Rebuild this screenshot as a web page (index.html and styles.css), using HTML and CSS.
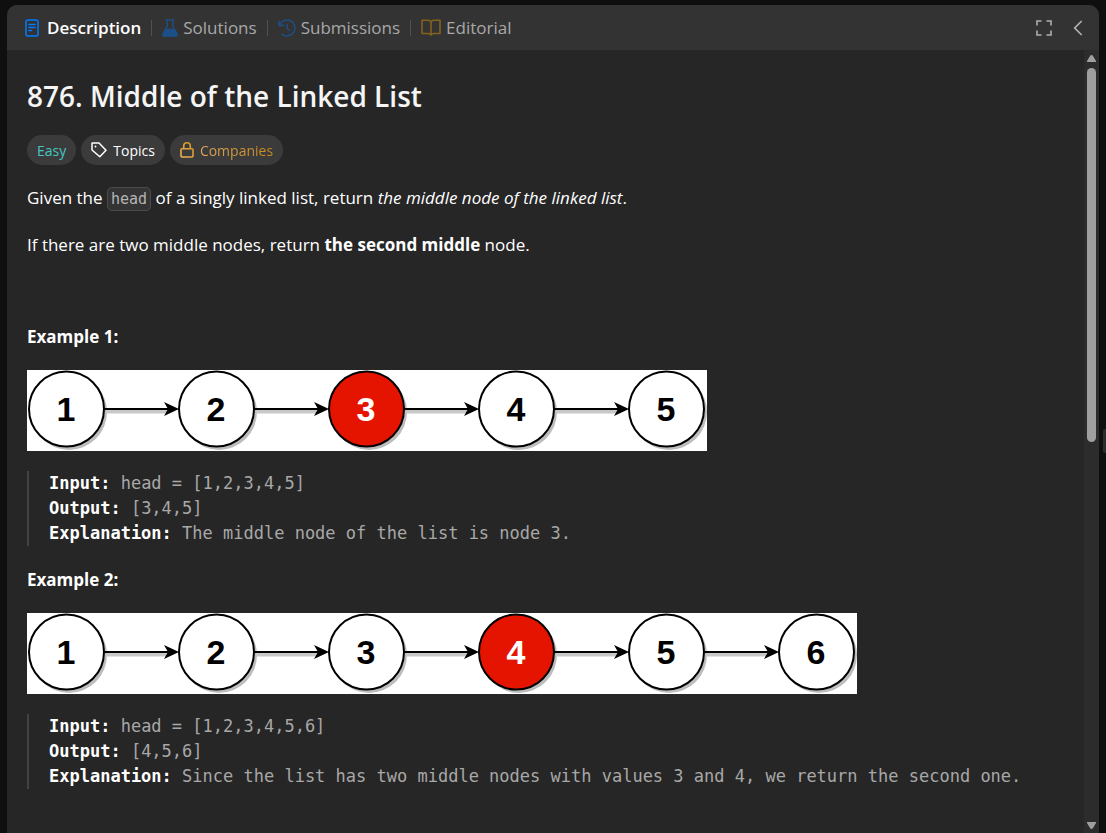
FILE: index.html
```html
<!DOCTYPE html>
<html lang="en">
<head>
<meta charset="utf-8">
<meta name="viewport" content="width=device-width, initial-scale=1">
<title>876. Middle of the Linked List</title>
<link rel="stylesheet" href="styles.css">
</head>
<body>
<main class="panel">
  <header class="panel-header">
    <nav class="tabs" aria-label="Problem sections">
      <button class="tab tab-active" type="button">
        <svg class="icon-doc" width="14" height="18" viewBox="0 0 14 18" fill="none" stroke="#007bff" stroke-width="1.5" stroke-linecap="round"><rect x="1" y="1" width="12" height="16" rx="2"/><path d="M4 5.5h6M4 8.5h6M4 11.5h2.5"/></svg>
        Description
      </button>
      <span class="divider"></span>
      <button class="tab" type="button">
        <svg width="16" height="18" viewBox="0 0 16 18" fill="none" stroke="#1d4f87" stroke-width="1.4" stroke-linecap="round" stroke-linejoin="round"><path d="M4 1h8M5.3 1v6L1 14.5Q.3 17 2.6 17h10.8q2.3 0 1.6-2.5L10.7 7V1"/><path d="M4 10.5h8l3 4.5q.2 2-1.600 2H2.600Q.8 17 1 15z" fill="#1d4f87"/></svg>
        Solutions
      </button>
      <span class="divider"></span>
      <button class="tab" type="button">
        <svg width="18" height="18" viewBox="0 0 18 18" fill="none" stroke="#1d4f87" stroke-width="1.5" stroke-linecap="round" stroke-linejoin="round"><path d="M1 2v4.500h4.500M1.500 6A8 8 0 1 1 4 15.200M9.200 5.500v4l2.300 2"/></svg>
        Submissions
      </button>
      <span class="divider"></span>
      <button class="tab" type="button">
        <svg width="20" height="17" viewBox="0 0 20 17" fill="none" stroke="#84621c" stroke-width="1.6" stroke-linejoin="round"><path d="M10 3Q9 1.200 7 1.200H1v13.300h6q2 0 3 1.500 1-1.500 3-1.500h6V1.200h-6q-2 0-3 1.800zV16"/></svg>
        Editorial
      </button>
    </nav>
    <div class="actions">
      <button class="action" type="button" aria-label="Full screen">
        <svg width="16" height="16" viewBox="0 0 16 16" fill="none" stroke="#b0b0b0" stroke-width="1.6"><path d="M1 5.500V1h4.500M10.500 1H15v4.500M15 10.500V15h-4.500M5.500 15H1v-4.500"/></svg>
      </button>
      <button class="action" type="button" aria-label="Collapse panel">
        <svg width="10" height="16" viewBox="0 0 10 16" fill="none" stroke="#b0b0b0" stroke-width="1.7"><path d="M8.700 1L1.700 8l7 7"/></svg>
      </button>
    </div>
  </header>
  <div class="panel-body">
    <article class="content">
      <h1 class="title">876. Middle of the Linked List</h1>
      <div class="pills">
        <span class="pill pill-easy">Easy</span>
        <button class="pill" type="button">
          <svg width="16" height="16" viewBox="0 0 16 16" fill="none" stroke="#fff" stroke-width="1.5" stroke-linejoin="round"><path d="M1 1.500Q1 1 1.500 1H8l7 7.200-6.200 6.600L1 8z"/><circle cx="4.500" cy="4.500" r=".9" fill="#fff" stroke="none"/></svg>
          Topics
        </button>
        <button class="pill" type="button">
          <svg width="14" height="16" viewBox="0 0 14 16" fill="none" stroke="url(#gold)" stroke-width="1.6"><defs><linearGradient id="gold" gradientUnits="userSpaceOnUse" x1="0" y1="16" x2="14" y2="0"><stop stop-color="#f0b65a"/><stop offset="1" stop-color="#d08c1c"/></linearGradient></defs><rect x="1" y="6.800" width="12" height="8.200" rx="1"/><path d="M3.700 6.500V4a3.300 3.200 0 0 1 6.600 0v2.500"/></svg>
          <span class="gold-text">Companies</span>
        </button>
      </div>
      <p class="text">Given the <code class="code">head</code> of a singly linked list, return <em>the middle node of the linked list</em>.</p>
      <p class="text">If there are two middle nodes, return <strong>the second middle</strong> node.</p>
      <p class="text">&nbsp;</p>
      <p class="text"><strong>Example 1:</strong></p>
      <svg class="diagram" width="680" height="81" viewBox="0 0 680 81" role="img" aria-label="Linked list of five nodes, node 3 highlighted">
        <defs>
          <g id="node"><circle cx="42" cy="42" r="38" fill="#bdbdbd"/><circle cx="39.500" cy="39" r="37.500" stroke="#000" stroke-width="2"/></g>
          <g id="arrow"><path d="M79 41.500h61" stroke="#c8c8c8" stroke-width="4"/><path d="M77 39h65" stroke="#000" stroke-width="2"/><path d="M152 39l-15-7 4 7-4 7z"/></g>
        </defs>
        <g fill="#fff"><use href="#node"/><use href="#node" x="150"/><use href="#node" x="300" fill="#e51400"/><use href="#node" x="450"/><use href="#node" x="600"/></g>
        <g fill="#000"><use href="#arrow"/><use href="#arrow" x="150"/><use href="#arrow" x="300"/><use href="#arrow" x="450"/></g>
        <g class="digits"><text x="39" y="51">1</text><text x="189" y="51">2</text><text x="339" y="51" fill="#fff">3</text><text x="489" y="51">4</text><text x="639" y="51">5</text></g>
      </svg>
      <pre class="sample"><strong>Input:</strong> head = [1,2,3,4,5]
<strong>Output:</strong> [3,4,5]
<strong>Explanation:</strong> The middle node of the list is node 3.</pre>
      <p class="text"><strong>Example 2:</strong></p>
      <svg class="diagram" width="830" height="81" viewBox="0 0 830 81" role="img" aria-label="Linked list of six nodes, node 4 highlighted">
        <g fill="#fff"><use href="#node"/><use href="#node" x="150"/><use href="#node" x="300"/><use href="#node" x="450" fill="#e51400"/><use href="#node" x="600"/><use href="#node" x="750"/></g>
        <g fill="#000"><use href="#arrow"/><use href="#arrow" x="150"/><use href="#arrow" x="300"/><use href="#arrow" x="450"/><use href="#arrow" x="600"/></g>
        <g class="digits"><text x="39" y="51">1</text><text x="189" y="51">2</text><text x="339" y="51">3</text><text x="489" y="51" fill="#fff">4</text><text x="639" y="51">5</text><text x="789" y="51">6</text></g>
      </svg>
      <pre class="sample"><strong>Input:</strong> head = [1,2,3,4,5,6]
<strong>Output:</strong> [4,5,6]
<strong>Explanation:</strong> Since the list has two middle nodes with values 3 and 4, we return the second one.</pre>
    </article>
    <div class="scrollbar" aria-hidden="true">
      <svg width="9" height="7" viewBox="0 0 9 7" fill="#9f9f9f"><path d="M4.500 0Q5.500 0 6 1l3 5v1H0V6l3-5q.5-1 1.500-1z"/></svg>
      <div class="track"><div class="thumb"></div></div>
      <svg width="9" height="7" viewBox="0 0 9 7" fill="#9f9f9f"><path d="M4.500 7Q5.500 7 6 6l3-5V0H0v1l3 5q.5 1 1.500 1z"/></svg>
    </div>
  </div>
</main>
<div class="splitter"></div>
</body>
</html>
```
FILE: styles.css
```css
* { box-sizing: border-box; }

body {
  margin: 0;
  height: 100vh;
  display: flex;
  background: #0f0f0f;
  color: #fff;
  font-family: "Open Sans", "Noto Sans", sans-serif;
  font-size: 17px;
  overflow: hidden;
}

button {
  font: inherit;
  color: inherit;
  background: none;
  border: 0;
  padding: 0;
  cursor: pointer;
}

svg { display: block; flex: none; }

.panel {
  flex: 1;
  min-width: 0;
  display: flex;
  flex-direction: column;
  margin: 5px 0 0 7px;
  border-radius: 10px 10px 0 0;
  background: #262626;
  overflow: hidden;
}

.panel-header {
  display: flex;
  justify-content: space-between;
  align-items: center;
  height: 45px;
  padding: 0 16px 0 18px;
  background: #333;
}

.tabs { display: flex; align-items: center; gap: 10px; }

.tab {
  display: flex;
  align-items: center;
  gap: 5px;
  line-height: 24px;
  color: #a8a8a8;
}

.tab-active { color: #fff; font-weight: 600; }
.icon-doc { margin-right: 3px; }
.divider { width: 1px; height: 16px; background: #515151; }
.actions { display: flex; align-items: center; gap: 21px; }

.panel-body { flex: 1; min-height: 0; display: flex; }
.content { flex: 1; min-width: 0; padding: 26px 20px 0; overflow: hidden; }

.title {
  margin: 0 0 19px;
  font-size: 28px;
  font-weight: 600;
  line-height: 40px;
  color: #f5f5f5;
}

.pills { display: flex; gap: 5px; margin-bottom: 20px; }

.pill {
  display: flex;
  align-items: center;
  gap: 6px;
  height: 30px;
  padding: 0 10px;
  border-radius: 15px;
  background: #3b3b3b;
  font-size: 14px;
}

.pill-easy { color: #46c6c2; }

.gold-text {
  background: linear-gradient(90deg, #dfa758, #c98a1e);
  background-clip: text;
  color: transparent;
}

.text { margin: 0 0 20px; line-height: 26px; }

.code {
  padding: 2px 3px;
  border: 1px solid #4b4b4b;
  border-radius: 5px;
  background: #343434;
  color: #b5b5b5;
  font-family: "DejaVu Sans Mono", monospace;
  font-size: 15px;
}

.diagram { max-width: 100%; background: #fff; margin-bottom: 20px; }

.digits {
  font-family: "Liberation Sans", Arial, sans-serif;
  font-size: 34px;
  font-weight: 700;
  text-anchor: middle;
}

.sample {
  margin: 0 0 21px;
  padding-left: 20px;
  border-left: 2px solid #424242;
  color: #a8a8a8;
  font-family: "DejaVu Sans Mono", monospace;
  font-size: 17px;
  line-height: 25px;
}

.sample strong { color: #fff; }

.scrollbar {
  width: 15px;
  display: flex;
  flex-direction: column;
  align-items: center;
  gap: 6px;
  padding: 5px 0 4px;
  background: #2c2c2c;
}

.track { flex: 1; }
.thumb { width: 9px; height: 50%; border-radius: 5px; background: #9f9f9f; }

.splitter {
  align-self: center;
  width: 3px;
  height: 24px;
  margin: 48px 0 0 4px;
  border-radius: 2px 0 0 2px;
  background: #2d2d2d;
}
```
